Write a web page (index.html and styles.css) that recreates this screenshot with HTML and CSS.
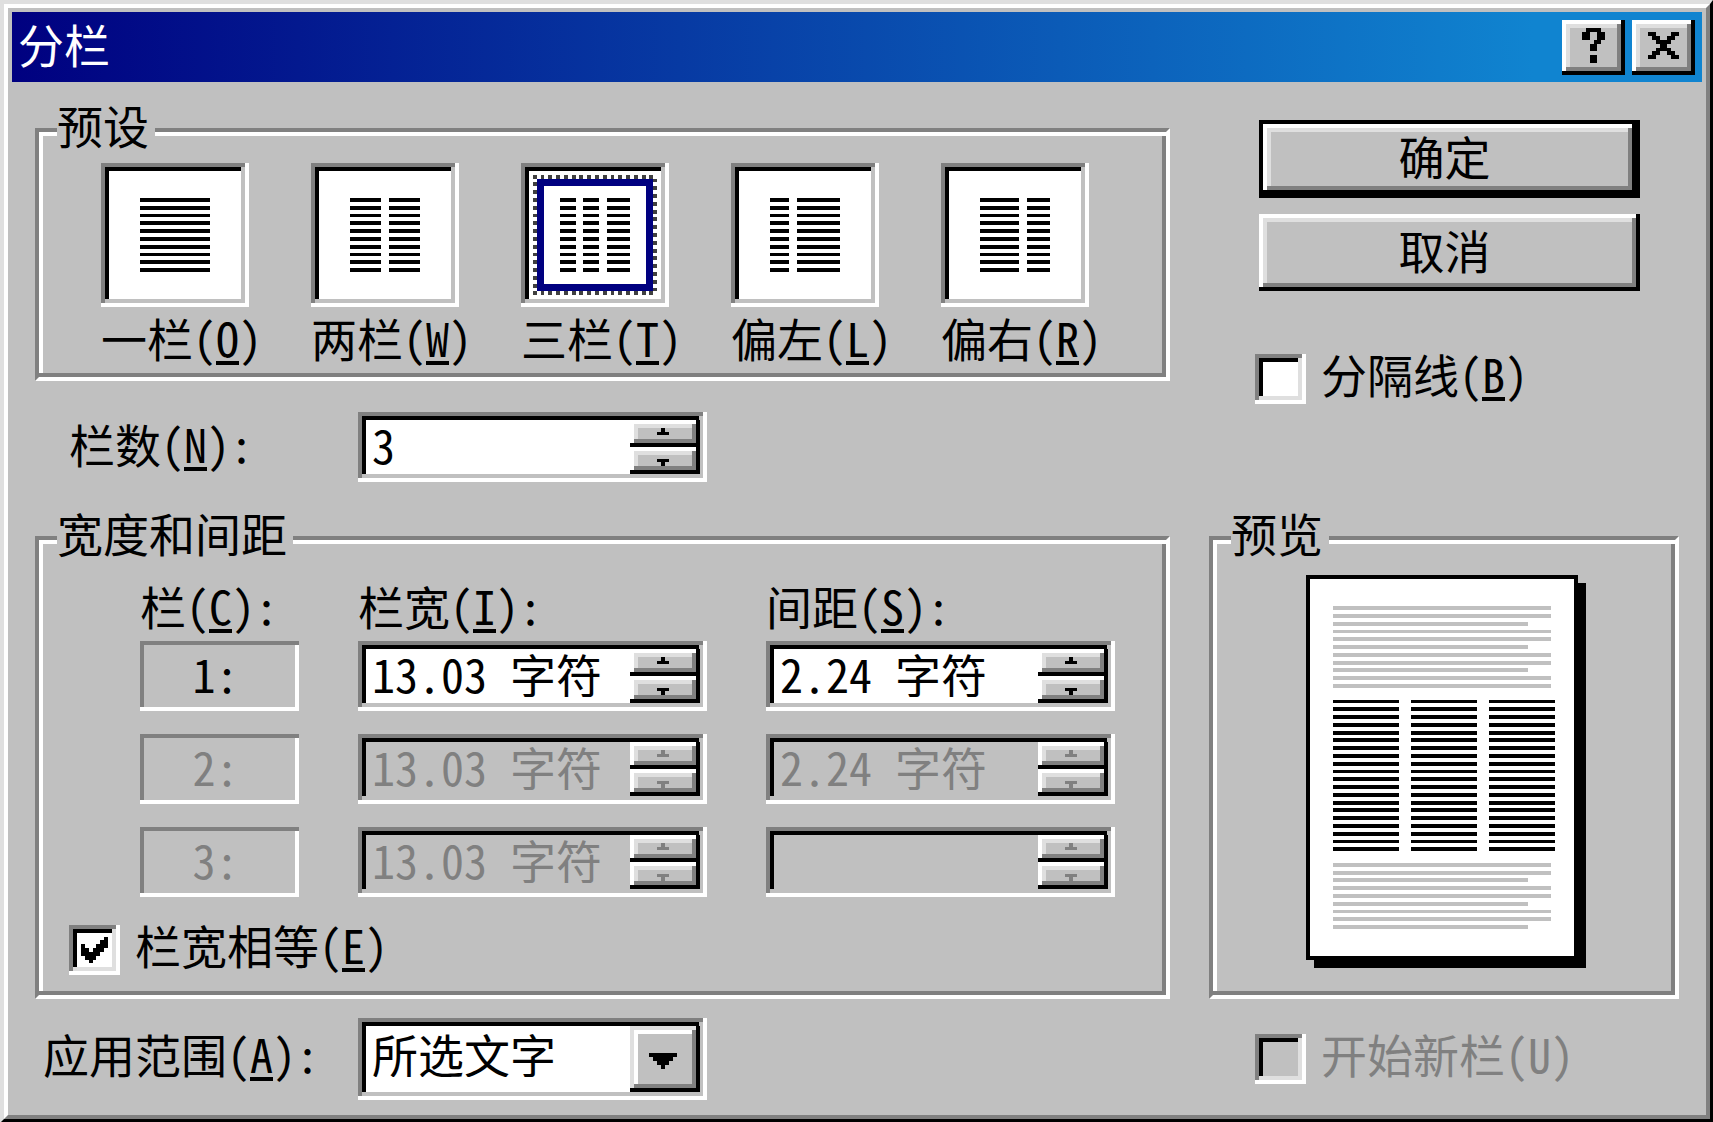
FILE: index.html
```html
<!DOCTYPE html>
<html lang="zh-CN">
<head>
<meta charset="utf-8">
<meta name="viewport" content="width=device-width, initial-scale=1">
<title>分栏</title>
<link rel="stylesheet" href="styles.css">
</head>
<body>
<svg class="defs" aria-hidden="true">
  <symbol id="up" viewBox="0 0 18 7" preserveAspectRatio="none"><path d="M8 2h1v1h1v1h-3v-1h1z"/></symbol>
  <symbol id="down" viewBox="0 0 18 7" preserveAspectRatio="none"><path d="M7 3h3v1h-1v1h-1v-1h-1z"/></symbol>
  <symbol id="tick" viewBox="0 0 13 13" preserveAspectRatio="none"><path d="M3 5h1v1h1v1h1v-1h1v-1h1v-1h1v-1h1v3h-1v1h-1v1h-1v1h-1v1h-1v-1h-1v-1h-1z"/></symbol>
</svg>
<main class="dialog">
  <div class="frame">
    <header class="titlebar">
      <h1 class="title">分栏</h1>
      <button class="caption-button raised" type="button" aria-label="帮助">
        <svg viewBox="0 0 16 14" preserveAspectRatio="none"><path d="M6 2h4v1h1v2h-1v1h-1v2h-2v-2h1v-1h1v-2h-2v2h-2v-2h1zM7 9h2v2h-2z"/></svg>
      </button>
      <button class="caption-button raised" type="button" aria-label="关闭">
        <svg viewBox="0 0 16 14" preserveAspectRatio="none"><path d="M4 3h2v1h1v1h2v-1h1v-1h2v1h-1v1h-1v1h-1v1h1v1h1v1h1v1h-2v-1h-1v-1h-2v1h-1v1h-2v-1h1v-1h1v-1h1v-1h-1v-1h-1v-1h-1z"/></svg>
      </button>
    </header>

    <form class="content">
      <div class="top-left">
        <fieldset class="group">
          <legend>预设</legend>
          <div class="presets">
            <label class="preset">
              <input class="sunken" type="radio" name="preset">
              <svg viewBox="0 0 38 37"><path d="M10 9h18v1H10zM10 11h18v1H10zM10 13h18v1H10zM10 15h18v1H10zM10 17h18v1H10zM10 19h18v1H10zM10 21h18v1H10zM10 23h18v1H10zM10 25h18v1H10zM10 27h18v1H10z"/></svg>
              <span>一栏(<u>O</u>)</span>
            </label>
            <label class="preset">
              <input class="sunken" type="radio" name="preset">
              <svg viewBox="0 0 38 37"><path d="M10 9h8v1h-8zM10 11h8v1h-8zM10 13h8v1h-8zM10 15h8v1h-8zM10 17h8v1h-8zM10 19h8v1h-8zM10 21h8v1h-8zM10 23h8v1h-8zM10 25h8v1h-8zM10 27h8v1h-8zM20 9h8v1h-8zM20 11h8v1h-8zM20 13h8v1h-8zM20 15h8v1h-8zM20 17h8v1h-8zM20 19h8v1h-8zM20 21h8v1h-8zM20 23h8v1h-8zM20 25h8v1h-8zM20 27h8v1h-8z"/></svg>
              <span>两栏(<u>W</u>)</span>
            </label>
            <label class="preset">
              <input class="sunken" type="radio" name="preset" checked>
              <svg viewBox="0 0 38 37">
                <path class="focus-dots" d="M3 3.500H35M3 33.500H35M3.500 3V34M34.500 4V34"/>
                <path class="selection" d="M5 5H33V32H5z"/>
                <path d="M10 9h4v1h-4zM10 11h4v1h-4zM10 13h4v1h-4zM10 15h4v1h-4zM10 17h4v1h-4zM10 19h4v1h-4zM10 21h4v1h-4zM10 23h4v1h-4zM10 25h4v1h-4zM10 27h4v1h-4zM16 9h4v1h-4zM16 11h4v1h-4zM16 13h4v1h-4zM16 15h4v1h-4zM16 17h4v1h-4zM16 19h4v1h-4zM16 21h4v1h-4zM16 23h4v1h-4zM16 25h4v1h-4zM16 27h4v1h-4zM22 9h6v1h-6zM22 11h6v1h-6zM22 13h6v1h-6zM22 15h6v1h-6zM22 17h6v1h-6zM22 19h6v1h-6zM22 21h6v1h-6zM22 23h6v1h-6zM22 25h6v1h-6zM22 27h6v1h-6z"/>
              </svg>
              <span>三栏(<u>T</u>)</span>
            </label>
            <label class="preset">
              <input class="sunken" type="radio" name="preset">
              <svg viewBox="0 0 38 37"><path d="M10 9h5v1h-5zM10 11h5v1h-5zM10 13h5v1h-5zM10 15h5v1h-5zM10 17h5v1h-5zM10 19h5v1h-5zM10 21h5v1h-5zM10 23h5v1h-5zM10 25h5v1h-5zM10 27h5v1h-5zM17 9h11v1h-11zM17 11h11v1h-11zM17 13h11v1h-11zM17 15h11v1h-11zM17 17h11v1h-11zM17 19h11v1h-11zM17 21h11v1h-11zM17 23h11v1h-11zM17 25h11v1h-11zM17 27h11v1h-11z"/></svg>
              <span>偏左(<u>L</u>)</span>
            </label>
            <label class="preset">
              <input class="sunken" type="radio" name="preset">
              <svg viewBox="0 0 38 37"><path d="M10 9h10v1h-10zM10 11h10v1h-10zM10 13h10v1h-10zM10 15h10v1h-10zM10 17h10v1h-10zM10 19h10v1h-10zM10 21h10v1h-10zM10 23h10v1h-10zM10 25h10v1h-10zM10 27h10v1h-10zM22 9h6v1h-6zM22 11h6v1h-6zM22 13h6v1h-6zM22 15h6v1h-6zM22 17h6v1h-6zM22 19h6v1h-6zM22 21h6v1h-6zM22 23h6v1h-6zM22 25h6v1h-6zM22 27h6v1h-6z"/></svg>
              <span>偏右(<u>R</u>)</span>
            </label>
          </div>
        </fieldset>
        <div class="field-row count-row">
          <label for="count">栏数(<u>N</u>):</label>
          <div class="spin sunken">
            <input id="count" type="text" value="3">
            <div class="spin-buttons">
              <button class="raised" type="button" aria-label="增加"><svg><use href="#up"/></svg></button>
              <button class="raised" type="button" aria-label="减少"><svg><use href="#down"/></svg></button>
            </div>
          </div>
        </div>
      </div>

      <div class="actions">
        <button class="action default raised" type="submit">确定</button>
        <button class="action raised" type="button">取消</button>
        <label class="check separator">
          <input class="sunken" type="checkbox">
          <svg><use href="#tick"/></svg>
          <span>分隔线(<u>B</u>)</span>
        </label>
      </div>

      <fieldset class="group">
        <legend>宽度和间距</legend>
        <div class="columns">
          <div class="cols heads">
            <span>栏(<u>C</u>):</span>
            <label for="w1">栏宽(<u>I</u>):</label>
            <label for="s1">间距(<u>S</u>):</label>
          </div>
          <div class="cols">
            <span class="index">1:</span>
            <div class="spin sunken">
              <input id="w1" type="text" value="13.03 字符">
              <div class="spin-buttons">
                <button class="raised" type="button" aria-label="增加"><svg><use href="#up"/></svg></button>
                <button class="raised" type="button" aria-label="减少"><svg><use href="#down"/></svg></button>
              </div>
            </div>
            <div class="spin sunken">
              <input id="s1" type="text" value="2.24 字符">
              <div class="spin-buttons">
                <button class="raised" type="button" aria-label="增加"><svg><use href="#up"/></svg></button>
                <button class="raised" type="button" aria-label="减少"><svg><use href="#down"/></svg></button>
              </div>
            </div>
          </div>
          <div class="cols disabled">
            <span class="index">2:</span>
            <div class="spin sunken">
              <input type="text" value="13.03 字符" aria-label="第 2 栏栏宽" disabled>
              <div class="spin-buttons">
                <button class="raised" type="button" aria-label="增加" disabled><svg><use href="#up"/></svg></button>
                <button class="raised" type="button" aria-label="减少" disabled><svg><use href="#down"/></svg></button>
              </div>
            </div>
            <div class="spin sunken">
              <input type="text" value="2.24 字符" aria-label="第 2 栏间距" disabled>
              <div class="spin-buttons">
                <button class="raised" type="button" aria-label="增加" disabled><svg><use href="#up"/></svg></button>
                <button class="raised" type="button" aria-label="减少" disabled><svg><use href="#down"/></svg></button>
              </div>
            </div>
          </div>
          <div class="cols disabled">
            <span class="index">3:</span>
            <div class="spin sunken">
              <input type="text" value="13.03 字符" aria-label="第 3 栏栏宽" disabled>
              <div class="spin-buttons">
                <button class="raised" type="button" aria-label="增加" disabled><svg><use href="#up"/></svg></button>
                <button class="raised" type="button" aria-label="减少" disabled><svg><use href="#down"/></svg></button>
              </div>
            </div>
            <div class="spin sunken">
              <input type="text" value="" aria-label="第 3 栏间距" disabled>
              <div class="spin-buttons">
                <button class="raised" type="button" aria-label="增加" disabled><svg><use href="#up"/></svg></button>
                <button class="raised" type="button" aria-label="减少" disabled><svg><use href="#down"/></svg></button>
              </div>
            </div>
          </div>
        </div>
        <label class="check equal">
          <input class="sunken" type="checkbox" checked>
          <svg><use href="#tick"/></svg>
          <span>栏宽相等(<u>E</u>)</span>
        </label>
      </fieldset>

      <fieldset class="group">
        <legend>预览</legend>
        <svg class="page" viewBox="0 0 72 101" role="img" aria-label="三栏版式预览">
          <path d="M2 2h70v99H2z"/>
          <path d="M0 0h70v99H0z"/>
          <path class="paper" d="M1 1h68v97H1z"/>
          <path class="other" d="M7 8h56v1H7zM7 10h56v1H7zM7 12h50v1H7zM7 14h56v1H7zM7 16h56v1H7zM7 18h50v1H7zM7 20h56v1H7zM7 22h56v1H7zM7 24h50v1H7zM7 26h56v1H7zM7 28h56v1H7z"/>
          <path d="M7 32h17v1H7zM7 34h17v1H7zM7 36h17v1H7zM7 38h17v1H7zM7 40h17v1H7zM7 42h17v1H7zM7 44h17v1H7zM7 46h17v1H7zM7 48h17v1H7zM7 50h17v1H7zM7 52h17v1H7zM7 54h17v1H7zM7 56h17v1H7zM7 58h17v1H7zM7 60h17v1H7zM7 62h17v1H7zM7 64h17v1H7zM7 66h17v1H7zM7 68h17v1H7zM7 70h17v1H7z"/>
          <path d="M27 32h17v1H27zM27 34h17v1H27zM27 36h17v1H27zM27 38h17v1H27zM27 40h17v1H27zM27 42h17v1H27zM27 44h17v1H27zM27 46h17v1H27zM27 48h17v1H27zM27 50h17v1H27zM27 52h17v1H27zM27 54h17v1H27zM27 56h17v1H27zM27 58h17v1H27zM27 60h17v1H27zM27 62h17v1H27zM27 64h17v1H27zM27 66h17v1H27zM27 68h17v1H27zM27 70h17v1H27z"/>
          <path d="M47 32h17v1H47zM47 34h17v1H47zM47 36h17v1H47zM47 38h17v1H47zM47 40h17v1H47zM47 42h17v1H47zM47 44h17v1H47zM47 46h17v1H47zM47 48h17v1H47zM47 50h17v1H47zM47 52h17v1H47zM47 54h17v1H47zM47 56h17v1H47zM47 58h17v1H47zM47 60h17v1H47zM47 62h17v1H47zM47 64h17v1H47zM47 66h17v1H47zM47 68h17v1H47zM47 70h17v1H47z"/>
          <path class="other" d="M7 74h56v1H7zM7 76h56v1H7zM7 78h50v1H7zM7 80h56v1H7zM7 82h56v1H7zM7 84h50v1H7zM7 86h56v1H7zM7 88h56v1H7zM7 90h50v1H7z"/>
        </svg>
      </fieldset>

      <div class="field-row apply-row">
        <label for="scope">应用范围(<u>A</u>):</label>
        <div class="combo sunken">
          <select id="scope"><option>所选文字</option></select>
          <svg class="combo-arrow" viewBox="0 0 18 17" preserveAspectRatio="none" aria-hidden="true"><path d="M5 7h7v1h-1v1h-1v1h-1v1h-1v-1h-1v-1h-1v-1h-1z"/></svg>
        </div>
      </div>

      <label class="check new-column disabled">
        <input class="sunken" type="checkbox" disabled>
        <svg><use href="#tick"/></svg>
        <span>开始新栏(U)</span>
      </label>
    </form>
  </div>
</main>
</body>
</html>
```
FILE: styles.css
```css
:root {
  --face: #c0c0c0;
  --light: #dfdfdf;
  --shade: #808080;
  --navy: #000080;
}

* { box-sizing: border-box; }

body {
  margin: 0;
  background: var(--face);
  color: #000;
  font: 46px/48px "Noto Sans CJK SC", sans-serif;
  font-feature-settings: "hwid";
}

button, input, select {
  margin: 0;
  padding: 0;
  border: 0;
  border-radius: 0;
  outline: 0;
  appearance: none;
  background: var(--face);
  color: inherit;
  font: inherit;
  font-feature-settings: inherit;
}

svg { display: block; shape-rendering: crispEdges; }

.defs { position: absolute; width: 0; height: 0; }

u {
  text-decoration-thickness: 4px;
  text-underline-offset: 4px;
  text-decoration-skip-ink: none;
}

/* Bevels */
.raised {
  --outer: #fff;
  --inner: var(--light);
  box-shadow:
    inset 0 -4px #000, inset -4px 0 #000,
    inset 0 4px var(--outer), inset 4px 0 var(--outer),
    inset 0 -8px var(--shade), inset -8px 0 var(--shade),
    inset 0 8px var(--inner), inset 8px 0 var(--inner);
}

.sunken {
  --rim: var(--face);
  background: #fff;
  box-shadow:
    inset 0 -4px #fff, inset -4px 0 #fff,
    inset 0 4px var(--shade), inset 4px 0 var(--shade),
    inset 0 -8px var(--rim), inset -8px 0 var(--rim),
    inset 0 8px #000, inset 8px 0 #000;
}

/* Window */
.dialog {
  min-height: 100vh;
  display: flex;
  border: solid;
  border-width: 4px 3px 4px 4px;
  border-color: var(--light) #000 #000 var(--light);
}

.frame {
  flex: 1;
  padding: 4px;
  border: 4px solid;
  border-color: #fff var(--shade) var(--shade) #fff;
}

.titlebar {
  display: flex;
  align-items: center;
  gap: 7px;
  height: 70px;
  padding: 0 7px 0 6px;
  background: linear-gradient(90deg, var(--navy), #1084d0 90%);
}

.title {
  flex: 1;
  margin: 0;
  padding-bottom: 8px;
  color: #fff;
  font: inherit;
}

.caption-button, .caption-button svg { width: 63px; height: 55px; }

.content {
  display: grid;
  grid-template-columns: 1fr 470px;
  gap: 19px 39px;
  padding: 24px 23px 11px;
}

/* Group boxes */
.group {
  min-width: 0;
  margin: 0;
  padding: 0 15px 0 18px;
  border: 4px solid;
  border-color: var(--shade) #fff #fff var(--shade);
  box-shadow:
    inset 0 4px #fff, inset 0 -4px var(--shade),
    inset 4px 0 #fff, inset -4px 0 var(--shade);
}

.group legend {
  padding: 0 6px 12px 0;
  background: var(--face);
  line-height: 36px;
}

/* Presets */
.presets {
  display: grid;
  grid-template-columns: repeat(5, 1fr);
  padding: 9px 0 16px 44px;
}

.preset {
  display: grid;
  grid-template-columns: 148px;
  row-gap: 6px;
  white-space: nowrap;
}

.preset input, .preset svg {
  grid-area: 1 / 1;
  width: 148px;
  height: 144px;
}

.preset svg { position: relative; }

.focus-dots { fill: none; stroke: #404040; stroke-dasharray: 1 1; }
.selection { fill: none; stroke: var(--navy); stroke-width: 2; }

/* Labelled fields */
.field-row { display: flex; align-items: center; }
.field-row > label { padding-bottom: 8px; }
.count-row { margin-top: 31px; padding: 0 0 13px 34px; }
.count-row > label { width: 289px; }
.apply-row { padding-left: 8px; }
.apply-row > label { width: 315px; padding-bottom: 12px; }

.spin {
  display: flex;
  width: 349px;
  height: 70px;
  padding: 8px 7px 8px 8px;
}

.spin input {
  flex: 1;
  min-width: 0;
  padding: 0 0 6px 6px;
  background: transparent;
}

.spin-buttons { display: flex; flex-direction: column; }

.spin-buttons button, .spin-buttons svg { width: 70px; height: 27px; }

.combo {
  display: grid;
  grid-template-columns: 1fr 70px;
  width: 349px;
  height: 82px;
  padding: 8px 7px 8px 8px;
}

.combo select {
  grid-area: 1 / 1 / 2 / 3;
  padding: 0 70px 12px 6px;
  background: transparent;
}

.combo-arrow {
  grid-area: 1 / 2;
  width: 70px;
  height: 66px;
  background: var(--face);
  pointer-events: none;
  box-shadow:
    inset 0 -4px #000, inset -4px 0 #000,
    inset 0 4px var(--light), inset 4px 0 var(--light),
    inset 0 -8px var(--shade), inset -8px 0 var(--shade),
    inset 0 8px #fff, inset 8px 0 #fff;
}

/* Width and spacing table */
.columns {
  display: grid;
  gap: 23px;
  padding: 19px 0 0 83px;
}

.cols {
  display: grid;
  grid-template-columns: 159px 349px 349px;
  column-gap: 59px;
}

.heads { margin-bottom: -11px; }

.index {
  padding: 8px 8px 8px 0;
  text-align: center;
  box-shadow:
    inset 0 -4px #fff, inset 0 4px var(--shade),
    inset -4px 0 #fff, inset 4px 0 var(--shade);
}

.disabled { color: var(--shade); }
.disabled .spin { background: var(--face); }
.disabled svg { fill: var(--shade); }

/* Check boxes */
.check {
  display: grid;
  grid-template-columns: 51px 1fr;
  column-gap: 15px;
  align-items: center;
}

.check input, .check svg { grid-area: 1 / 1; width: 51px; height: 50px; }
.check input { --rim: var(--light); }
.check svg { position: relative; visibility: hidden; }
.check input:checked + svg { visibility: visible; }
.check input:disabled { background: var(--face); }
.check span { height: 50px; line-height: 38px; }

.equal { margin: 28px 0 20px 12px; }
.separator { margin: 63px 0 0 -4px; }
.new-column { align-self: start; margin: 16px 0 0 46px; }

/* Actions */
.actions {
  display: flex;
  flex-direction: column;
  padding: 14px 39px 0 50px;
}

.action { height: 77px; padding: 0 10px 8px 0; }

.action.default {
  height: 78px;
  margin-bottom: 16px;
  border: 4px solid #000;
}

/* Preview */
.page { width: 280px; height: 393px; margin: 13px auto 0; }
.paper { fill: #fff; }
.other { fill: var(--face); }
```
